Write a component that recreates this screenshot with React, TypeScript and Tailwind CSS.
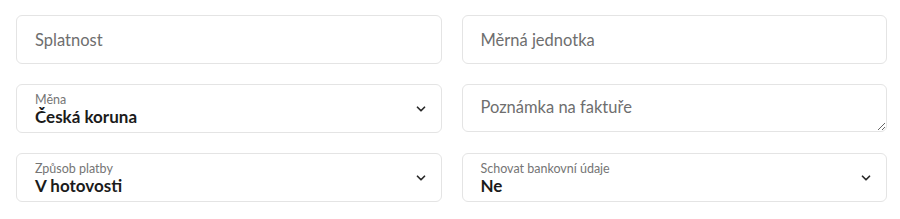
import { ChevronDown } from 'lucide-react'

const font = { fontFamily: 'Lato, "Open Sans", sans-serif' }

function TextField({ placeholder }: { placeholder: string }) {
  return (
    <input
      placeholder={placeholder}
      className="h-[49px] w-full rounded-md border border-[#e4e4e4] bg-white px-[18px] text-[16.5px] text-[#1b1b1b] placeholder:text-[#6e6e6e] outline-none"
    />
  )
}

function SelectField({ label, value }: { label: string; value: string }) {
  return (
    <div className="flex h-[49px] w-full items-center justify-between rounded-md border border-[#e4e4e4] bg-white pl-[18px] pr-[13px]">
      <div className="flex flex-col pt-[1px]">
        <span className="text-[12.5px] leading-[15px] text-[#757575]">{label}</span>
        <span className="text-[17px] font-bold leading-[20px] text-[#1b1b1b]">{value}</span>
      </div>
      <ChevronDown size={14} strokeWidth={3} className="text-[#2a2a2a]" />
    </div>
  )
}

export default function App() {
  return (
    <div className="min-h-[219px] bg-white pl-4 pr-[13px] pt-[15px]" style={font}>
      <div className="grid grid-cols-2 gap-x-5 gap-y-5">
        <TextField placeholder="Splatnost" />
        <TextField placeholder="Měrná jednotka" />
        <SelectField label="Měna" value="Česká koruna" />
        <textarea
          placeholder="Poznámka na faktuře"
          className="h-[48px] w-full rounded-md border border-[#e4e4e4] bg-white px-[18px] pt-[12px] text-[16.5px] leading-[20px] text-[#1b1b1b] placeholder:text-[#6e6e6e] outline-none"
        />
        <SelectField label="Způsob platby" value="V hotovosti" />
        <SelectField label="Schovat bankovní údaje" value="Ne" />
      </div>
    </div>
  )
}
